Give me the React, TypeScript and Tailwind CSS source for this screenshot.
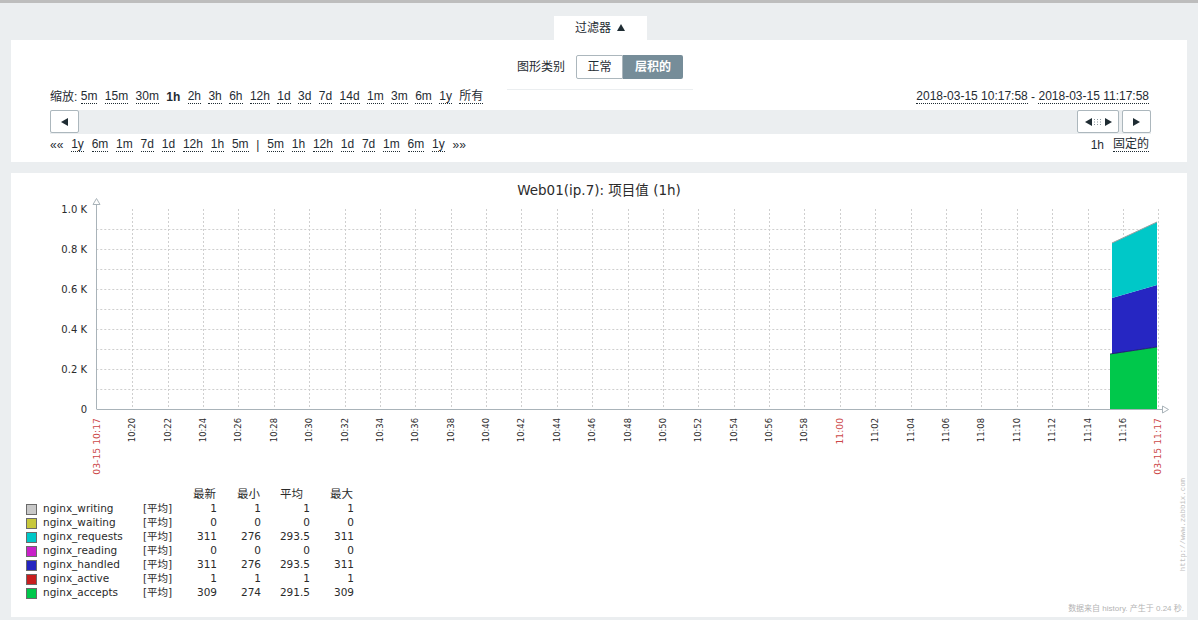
const ZOOM = ['5m', '15m', '30m', '1h', '2h', '3h', '6h', '12h', '1d', '3d', '7d', '14d', '1m', '3m', '6m', '1y', '所有'];
const NAV_LEFT = ['1y', '6m', '1m', '7d', '1d', '12h', '1h', '5m'];
const NAV_RIGHT = ['5m', '1h', '12h', '1d', '7d', '1m', '6m', '1y'];

// plot geometry (svg coords, panel-relative)
const X0 = 85.3;
const SX = 17.69; // px per minute
const START = 17.9667; // 10:17:58
const X1 = X0 + 60 * SX;
const YB = 236;
const YT = 36;

const ticks = Array.from({ length: 29 }, (_, i) => 20 + i * 2);
const tickLabel = (m: number) => (m < 60 ? `10:${m}` : `11:${String(m - 60).padStart(2, '0')}`);
const tx = (m: number) => X0 + (m - START) * SX;

const LEGEND = [
  { name: 'nginx_writing', color: '#c8c8c8', v: ['1', '1', '1', '1'] },
  { name: 'nginx_waiting', color: '#c8c83c', v: ['0', '0', '0', '0'] },
  { name: 'nginx_requests', color: '#00c8c8', v: ['311', '276', '293.5', '311'] },
  { name: 'nginx_reading', color: '#c820c8', v: ['0', '0', '0', '0'] },
  { name: 'nginx_handled', color: '#2424c0', v: ['311', '276', '293.5', '311'] },
  { name: 'nginx_active', color: '#c81e1e', v: ['1', '1', '1', '1'] },
  { name: 'nginx_accepts', color: '#00c84b', v: ['309', '274', '291.5', '309'] },
];

const FONT = 'DejaVu Sans, Noto Sans CJK SC, sans-serif';

function Link({ children }: { children: React.ReactNode }) {
  return <span className="border-b border-dotted border-[#1f2c33] leading-[13px]">{children}</span>;
}

function Tri({ dir }: { dir: 'l' | 'r' | 'u' }) {
  const pts = dir === 'l' ? '7,0 7,8 0,4' : dir === 'r' ? '0,0 0,8 7,4' : '0,7 8,7 4,0';
  return (
    <svg width={dir === 'u' ? 8 : 7} height={8} viewBox={dir === 'u' ? '0 0 8 8' : '0 0 7 8'}>
      <polygon points={pts} fill="#1f2c33" />
    </svg>
  );
}

function Chart() {
  return (
    <svg width={1176} height={315} className="block shrink-0">
      <text x={588} y={22} textAnchor="middle" fontFamily={FONT} fontSize={13.5} fill="#2b2b2b">
        Web01(ip.7): 项目值 (1h)
      </text>

      {/* grid */}
      {Array.from({ length: 9 }, (_, k) => (
        <line key={k} x1={X0} x2={X1} y1={YB - 20 * (k + 1) + 0.5} y2={YB - 20 * (k + 1) + 0.5} stroke="#cfcfcf" strokeDasharray="2 2" />
      ))}
      {ticks.map((m) => (
        <line key={m} x1={Math.round(tx(m)) + 0.5} x2={Math.round(tx(m)) + 0.5} y1={YT} y2={YB} stroke="#cfcfcf" strokeDasharray="2 2" />
      ))}
      <line x1={Math.round(X1) + 0.5} x2={Math.round(X1) + 0.5} y1={YT} y2={YB} stroke="#cfcfcf" strokeDasharray="2 2" />

      {/* data */}
      <polygon points="1099,236 1099,181 1146,174 1146,236" fill="#00c84b" />
      <polygon points="1101,181 1101,125 1146,112 1146,174" fill="#2626c2" />
      <polygon points="1101,125 1101,70 1146,49 1146,112" fill="#00c8c8" />
      <polyline points="1099,181 1146,174" fill="none" stroke="#1c1c5a" strokeWidth={0.8} />
      <polyline points="1101,70 1146,49" fill="none" stroke="#9aa0a0" strokeWidth={1} />

      {/* axes */}
      <line x1={85.5} x2={85.5} y1={27} y2={YB} stroke="#a9b3b9" />
      <polygon points="82,31.5 85.5,25.5 89,31.5" fill="white" stroke="#a9b3b9" />
      <line x1={85.5} x2={1151} y1={YB + 0.5} y2={YB + 0.5} stroke="#a9b3b9" />
      <polygon points="1151.5,233 1157.5,236.5 1151.5,240" fill="white" stroke="#a9b3b9" />

      {/* y labels */}
      {['1.0 K', '0.8 K', '0.6 K', '0.4 K', '0.2 K', '0'].map((l, i) => (
        <text key={l} x={76} y={YT + i * 40} textAnchor="end" dominantBaseline="central" fontFamily={FONT} fontSize={10} fill="#2b2b2b">
          {l}
        </text>
      ))}

      {/* x labels */}
      {ticks.map((m) => {
        const x = tx(m);
        const red = m === 60;
        return (
          <text
            key={m}
            x={x}
            y={245}
            transform={`rotate(-90 ${x} 245)`}
            textAnchor="end"
            dominantBaseline="central"
            fontFamily={FONT}
            fontSize={red ? 9.2 : 8.4}
            fill={red ? '#cc4848' : '#2b2b2b'}
          >
            {tickLabel(m)}
          </text>
        );
      })}
      {[
        { x: X0, l: '03-15 10:17' },
        { x: X1, l: '03-15 11:17' },
      ].map((d) => (
        <text
          key={d.l}
          x={d.x}
          y={245}
          transform={`rotate(-90 ${d.x} 245)`}
          textAnchor="end"
          dominantBaseline="central"
          fontFamily={FONT}
          fontSize={9.3}
          fill="#cc4848"
        >
          {d.l}
        </text>
      ))}
    </svg>
  );
}

export default function App() {
  return (
    <div className="w-[1198px] h-[620px] overflow-hidden bg-[#ebeef0] border-t-[3px] border-[#bdbdbd] flex flex-col font-['Liberation_Sans','Noto_Sans_CJK_SC',sans-serif] text-[12px] text-[#1f2c33]">
      {/* filter tab */}
      <div className="flex justify-center pt-[13px] pl-[2px]">
        <div className="w-[93px] h-[24px] bg-white flex items-center justify-center gap-[6px]">
          <span>过滤器</span>
          <Tri dir="u" />
        </div>
      </div>

      {/* filter panel */}
      <div className="mx-[11px] bg-white h-[122px] flex flex-col">
        <div className="flex justify-center pt-[15px] pl-[2px]">
          <div className="flex items-center gap-[11px] px-[10px] pb-[10px] border-b border-[#ebeef0]">
            <span>图形类别</span>
            <div className="flex">
              <span className="w-[47px] h-[24px] border border-[#acb7bd] rounded-l-[2px] flex items-center justify-center">正常</span>
              <span className="w-[60px] h-[24px] bg-[#768d99] text-white font-bold rounded-r-[2px] flex items-center justify-center">层积的</span>
            </div>
          </div>
        </div>

        <div className="flex justify-between items-center h-[14px] ml-[39px] mr-[38px]">
          <div className="flex items-center gap-[7.4px]">
            <span className="-mr-[4px]">缩放:</span>
            {ZOOM.map((z, i) =>
              z === '1h' ? (
                <span key={i} className="font-bold">1h</span>
              ) : (
                <Link key={i}>{z}</Link>
              ),
            )}
          </div>
          <div className="flex items-center">
            <Link>2018-03-15 10:17:58</Link>
            <span className="whitespace-pre"> - </span>
            <Link>2018-03-15 11:17:58</Link>
          </div>
        </div>

        <div className="mt-[6px] h-[24px] ml-[39px] mr-[36px] bg-[#ebeef0] flex justify-between items-start">
          <div className="w-[29px] h-[23px] bg-white border border-[#acb7bd] rounded-[2px] flex items-center justify-center">
            <Tri dir="l" />
          </div>
          <div className="flex gap-[3px]">
            <div className="w-[42px] h-[23px] bg-white border border-[#acb7bd] rounded-[2px] flex items-center justify-center gap-[2px]">
              <Tri dir="l" />
              <svg width={9} height={6} viewBox="0 0 9 6">
                {[0, 3, 6].map((x) =>
                  [0, 2.5, 5].map((y) => <rect key={`${x}-${y}`} x={x} y={y} width={1} height={1} fill="#8a969c" />),
                )}
              </svg>
              <Tri dir="r" />
            </div>
            <div className="w-[29px] h-[23px] bg-white border border-[#acb7bd] rounded-[2px] flex items-center justify-center">
              <Tri dir="r" />
            </div>
          </div>
        </div>

        <div className="mt-[4px] h-[14px] ml-[39px] mr-[38px] flex justify-between items-center">
          <div className="flex items-center gap-[7.8px]">
            <span>««</span>
            {NAV_LEFT.map((z, i) => (
              <Link key={i}>{z}</Link>
            ))}
            <span>|</span>
            {NAV_RIGHT.map((z, i) => (
              <Link key={i}>{z}</Link>
            ))}
            <span>»»</span>
          </div>
          <div className="flex items-center gap-[9px]">
            <span>1h</span>
            <Link>固定的</Link>
          </div>
        </div>
      </div>

      {/* graph panel */}
      <div className="mt-[11px] mx-[11px] bg-white h-[444px] flex flex-col">
        <Chart />
        <div className="flex flex-1 font-['DejaVu_Sans','Noto_Sans_CJK_SC',sans-serif] text-[10.5px] text-[#2b2b2b]">
          <div className="pl-[15px] flex flex-col">
            <div className="flex h-[14px] items-center text-[11.5px]">
              <span className="w-[147px]" />
              <span className="w-[44px] text-right pr-[1px]">最新</span>
              <span className="w-[44px] text-right pr-[1px]">最小</span>
              <span className="w-[49px] text-right pr-[7px]">平均</span>
              <span className="w-[44px] text-right pr-[1px]">最大</span>
            </div>
            {LEGEND.map((r) => (
              <div key={r.name} className="flex h-[14px] items-center">
                <span className="w-[11px] h-[11px] border border-[#6a6a6a]" style={{ backgroundColor: r.color }} />
                <span className="w-[100px] ml-[6px]">{r.name}</span>
                <span className="w-[30px]">[平均]</span>
                <span className="w-[44px] text-right">{r.v[0]}</span>
                <span className="w-[44px] text-right">{r.v[1]}</span>
                <span className="w-[49px] text-right">{r.v[2]}</span>
                <span className="w-[44px] text-right">{r.v[3]}</span>
              </div>
            ))}
          </div>
          <div className="ml-auto w-[8px] -mt-[10px] flex items-start">
            <span className="[writing-mode:vertical-rl] rotate-180 font-['Liberation_Mono',monospace] text-[7.4px] leading-[8px] text-[#c0c0c0]">
              http://www.zabbix.com
            </span>
          </div>
        </div>
        <div className="flex justify-end pr-[3px] pb-[3px] h-[14px] items-end text-[8px] leading-[11px] text-[#b4b4b4]">
          数据来自 history. 产生于 0.24 秒.
        </div>
      </div>
    </div>
  );
}
